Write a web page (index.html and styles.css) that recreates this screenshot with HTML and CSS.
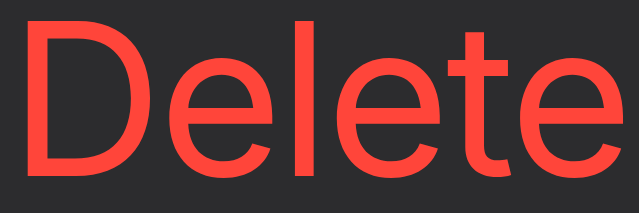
FILE: index.html
```html
<!DOCTYPE html>
<html>
<head>
<meta charset="utf-8">
<link rel="stylesheet" href="styles.css">
</head>
<body>
<div class="wrap"><span class="label">Delete</span></div>
</body>
</html>
```

FILE: styles.css
```css
html, body {
  margin: 0;
  padding: 0;
  background: #2c2c2e;
  width: 639px;
  height: 213px;
  overflow: hidden;
}
.wrap {
  display: flex;
  align-items: flex-start;
  height: 213px;
  padding-left: 9px;
  box-sizing: border-box;
}
.label {
  font-family: Inter, "Liberation Sans", sans-serif;
  font-size: 213px;
  line-height: 197px;
  color: #ff453a;
  letter-spacing: -4.2px;
  white-space: nowrap;
}
```
